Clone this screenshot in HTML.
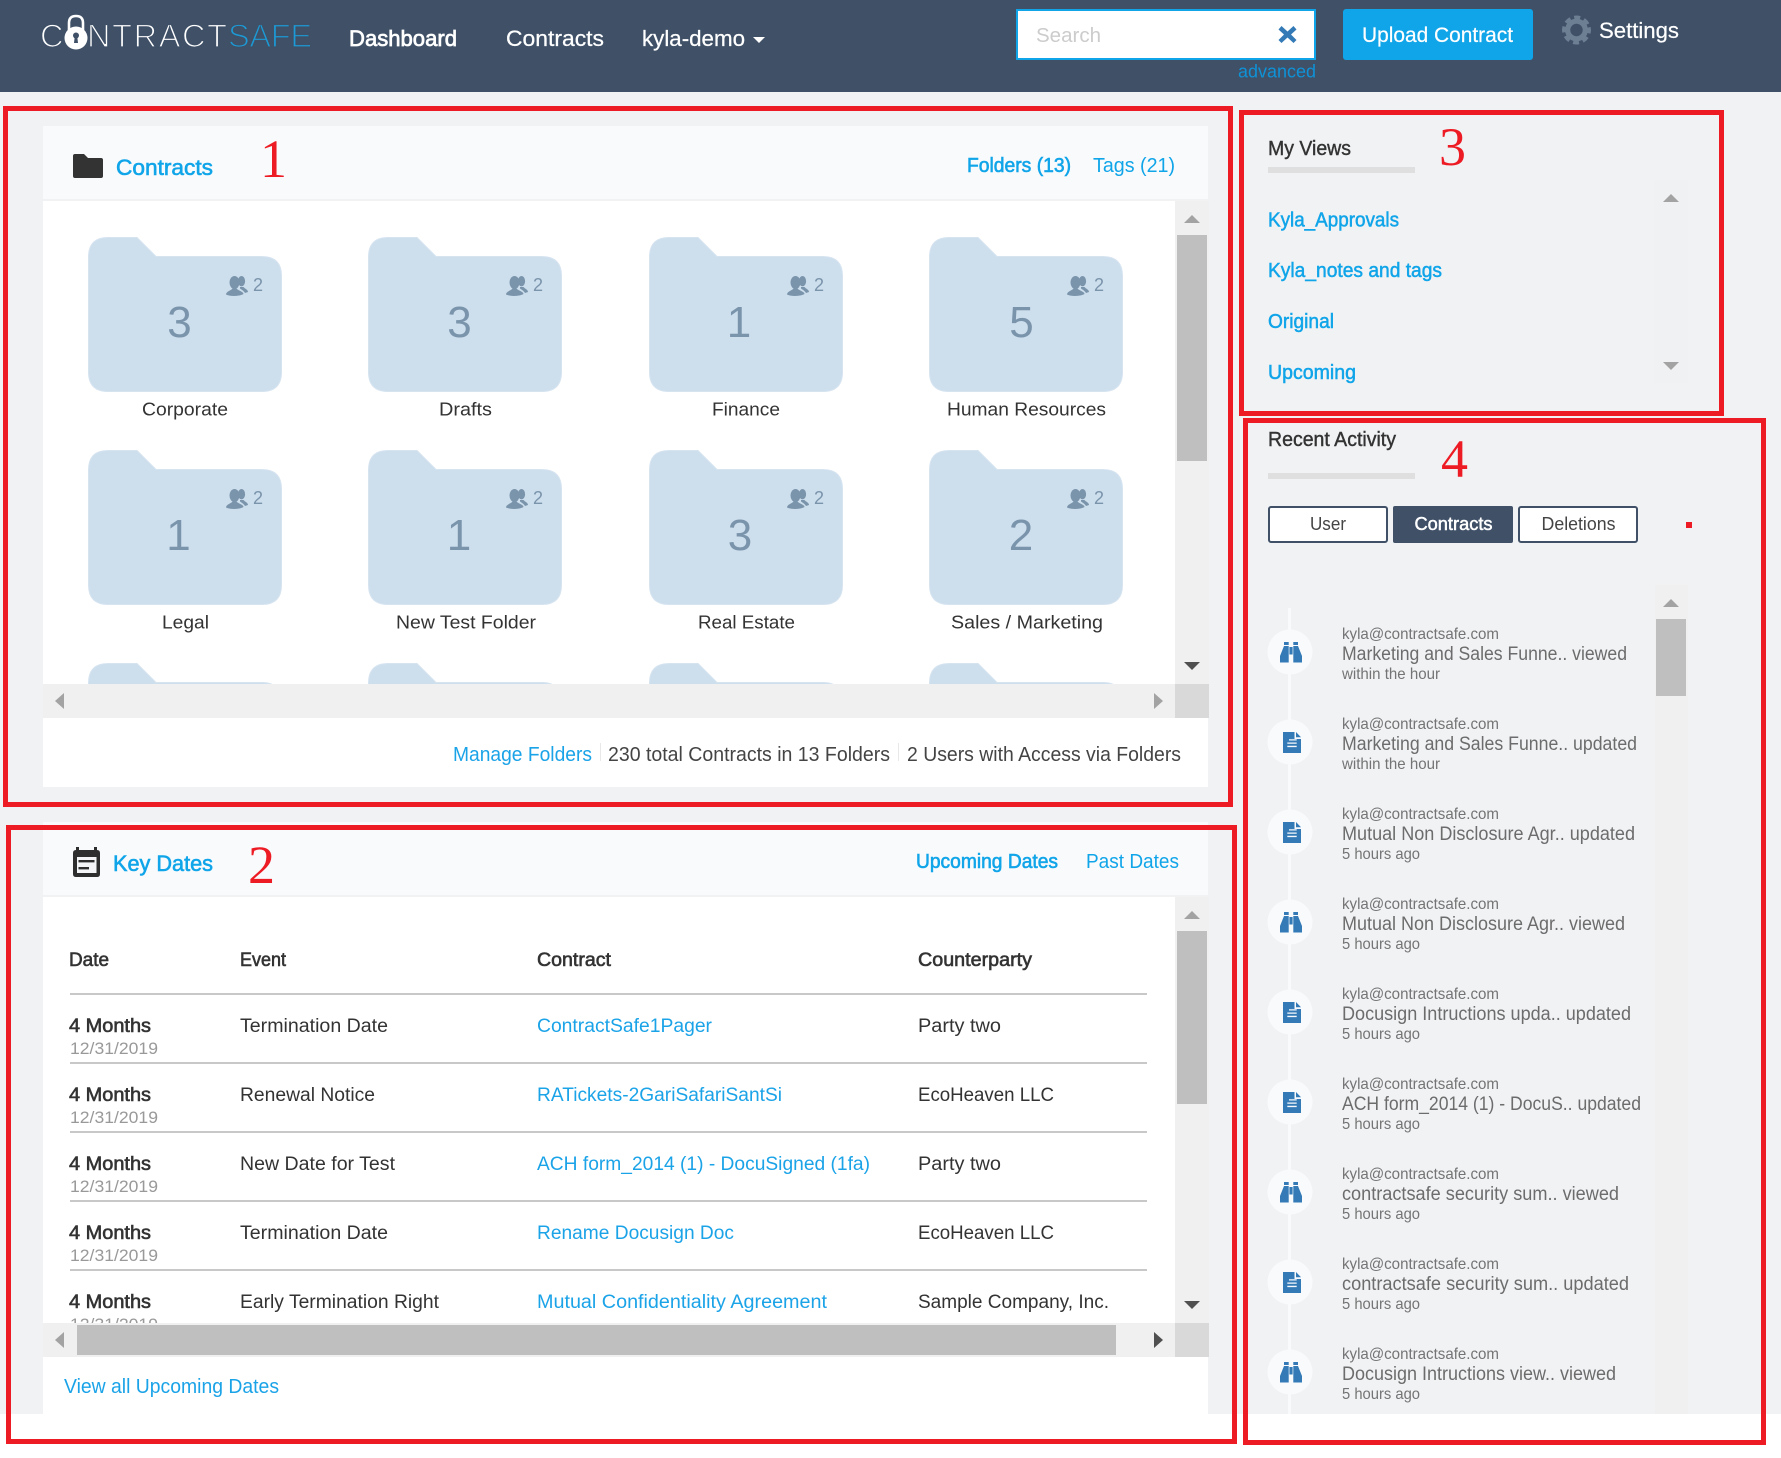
<!DOCTYPE html>
<html><head><meta charset="utf-8"><title>ContractSafe Dashboard</title>
<style>
html,body{margin:0;padding:0;background:#fff;overflow:hidden}
svg{display:block}
text{font-family:"Liberation Sans",Arial,sans-serif;font-size:19px}
.n{fill:#333}
.nm{fill:#333;stroke:#333;stroke-width:.6}
.bl{fill:#10a5e9}
.blm{fill:#10a5e9;stroke:#10a5e9;stroke-width:.6}
.lk{fill:#1ba3e8}
.w{fill:#fff}
.wm{fill:#fff;stroke:#fff;stroke-width:.7}
.d{fill:#999;font-size:17px}
.f{fill:#333;font-size:18px}
.c{fill:#7a94ab;font-size:44px}
.s{fill:#7a94ab;font-size:18px}
.e{fill:#747474;font-size:16px}
.a{fill:#6c6c6c;font-size:19px}
.r{fill:#ed1c24;font-family:"Liberation Serif",serif;font-size:54px}
</style></head><body>
<svg xmlns="http://www.w3.org/2000/svg" width="1781" height="1458" viewBox="0 0 1781 1458">
<defs>
<clipPath id="c1"><rect x="43" y="201" width="1132" height="483"/></clipPath>
<clipPath id="c2"><rect x="43" y="897" width="1132" height="426"/></clipPath>
<path id="fo" fill="#cddeed" stroke="#d6e4f0" stroke-width="1" d="M0.5 20Q0.5 0.5 20 0.5H49L68 19.5H174Q193.5 19.5 193.5 39V135Q193.5 154.5 174 154.5H20Q0.5 154.5 0.5 135Z"/>
<g id="pp" fill="#7a94ab"><ellipse cx="8.5" cy="6.5" rx="5" ry="6.5"/><path d="M0 18.5C0 15.5 5 14.5 6.5 12.5H10.5C12 14.5 17.5 15.5 17.5 18C13 20.5 4 20.5 0 18.5Z"/><ellipse cx="15.5" cy="5.2" rx="3.6" ry="5.2"/><path d="M14 11H17.5C18.5 12.5 22 13.5 22 16L19 17C18 15 15.5 13.5 14 12.5Z"/></g>
<g id="bi" fill="#337ab7"><path d="M4 0H8.7V3H4ZM13.3 0H18V3H13.3ZM4 4H8.7V20.5H0V14ZM18 4H13.3V20.5H22V14ZM9.4 5H12.6V12.5H9.4Z"/></g>
<path id="fi" fill="#337ab7" fill-rule="evenodd" d="M0 0H11.5V7H18V21H0ZM13 0L18 5.2H13ZM6 7.2V8.5H13.7V7.2ZM4.3 10.5V11.8H13.7V10.5ZM4.3 13.8V15.1H13.7V13.8Z"/>
</defs>

<rect width="1781" height="1414" fill="#f1f2f4"/>
<rect width="1781" height="92" fill="#3f5067"/>

<!-- logo -->
<text x="40" y="47" style="font-size:32.5px" class="w" stroke="#3f5067" stroke-width="1.3">C</text>
<text x="87" y="47" style="font-size:32.5px" class="w" stroke="#3f5067" stroke-width="1.3" textLength="140" lengthAdjust="spacing">NTRACT</text>
<text x="228" y="47" style="font-size:32.5px;fill:#1c9ad6" stroke="#3f5067" stroke-width="1.3" textLength="84" lengthAdjust="spacing">SAFE</text>
<path d="M69 30V23Q69 16 76 16Q83 16 83 23V30" fill="none" stroke="#fff" stroke-width="2.6"/>
<circle cx="76" cy="38" r="11.5" fill="#fff"/>
<circle cx="76" cy="35.5" r="3" fill="#3f5067"/><path d="M74.8 36H77.2L78 43H74Z" fill="#3f5067"/>

<!-- nav -->
<text x="349" y="46" class="wm" style="font-size:22px" textLength="108" lengthAdjust="spacingAndGlyphs">Dashboard</text>
<text x="506" y="46" class="w" style="font-size:22px;stroke:#fff;stroke-width:.25" textLength="98" lengthAdjust="spacingAndGlyphs">Contracts</text>
<text x="642" y="46" class="w" style="font-size:22px;stroke:#fff;stroke-width:.25" textLength="103" lengthAdjust="spacingAndGlyphs">kyla-demo</text>
<path d="M753 37H765L759 43Z" fill="#fff"/>

<!-- search -->
<rect x="1017" y="10" width="298" height="49" fill="#fff" stroke="#10a5e9" stroke-width="2"/>
<text x="1036" y="42" style="font-size:20px;fill:#ccc" textLength="65" lengthAdjust="spacingAndGlyphs">Search</text>
<path d="M1278.5 29.5L1281.5 26L1287.5 31.5L1293.5 26L1296.5 29.5L1291 34.5L1296.5 40L1293.5 43L1287.5 37.5L1281.5 43L1278.5 40L1284 34.5Z" fill="#337ab7"/>
<text x="1238" y="77.5" style="font-size:18px;fill:#0f92d6" textLength="78" lengthAdjust="spacingAndGlyphs">advanced</text>
<rect x="1343" y="9" width="190" height="51" rx="3" fill="#10a5e9"/>
<text x="1362" y="42" class="w" style="font-size:21px;stroke:#fff;stroke-width:.2" textLength="151" lengthAdjust="spacingAndGlyphs">Upload Contract</text>
<circle cx="1576.5" cy="30" r="11.5" fill="none" stroke="#6d7f93" stroke-width="6" stroke-dasharray="5.4 3.63" transform="rotate(-12 1576.5 30)"/>
<circle cx="1576.5" cy="30" r="8.8" fill="none" stroke="#6d7f93" stroke-width="5.2"/>
<text x="1599" y="38" class="w" style="font-size:22px;stroke:#fff;stroke-width:.2" textLength="80" lengthAdjust="spacingAndGlyphs">Settings</text>

<!-- panel 1 -->
<rect x="43" y="126" width="1165" height="73" fill="#f9fafc"/>
<rect x="43" y="201" width="1165" height="586" fill="#fff"/>
<path d="M73 156Q73 154 75 154H84L88 158H101Q103 158 103 160V176Q103 178 101 178H75Q73 178 73 176Z" fill="#333"/>
<text x="116" y="175" class="blm" style="font-size:22px" textLength="97" lengthAdjust="spacingAndGlyphs">Contracts</text>
<text x="967" y="172" class="blm" style="font-size:20px" textLength="104" lengthAdjust="spacingAndGlyphs">Folders (13)</text>
<text x="1093" y="172" class="bl" style="font-size:20px" textLength="82" lengthAdjust="spacingAndGlyphs">Tags (21)</text>

<g clip-path="url(#c1)">
<use href="#fo" x="88" y="237"/><use href="#fo" x="368" y="237"/><use href="#fo" x="649" y="237"/><use href="#fo" x="929" y="237"/>
<use href="#fo" x="88" y="450"/><use href="#fo" x="368" y="450"/><use href="#fo" x="649" y="450"/><use href="#fo" x="929" y="450"/>
<use href="#fo" x="88" y="663"/><use href="#fo" x="368" y="663"/><use href="#fo" x="649" y="663"/><use href="#fo" x="929" y="663"/>
</g>
<use href="#pp" x="226" y="276"/><use href="#pp" x="506" y="276"/><use href="#pp" x="787" y="276"/><use href="#pp" x="1067" y="276"/>
<use href="#pp" x="226" y="489"/><use href="#pp" x="506" y="489"/><use href="#pp" x="787" y="489"/><use href="#pp" x="1067" y="489"/>
<text x="253" y="291" class="s">2</text><text x="533" y="291" class="s">2</text><text x="814" y="291" class="s">2</text><text x="1094" y="291" class="s">2</text>
<text x="253" y="504" class="s">2</text><text x="533" y="504" class="s">2</text><text x="814" y="504" class="s">2</text><text x="1094" y="504" class="s">2</text>
<g text-anchor="middle">
<text x="179.5" y="337" class="c">3</text><text x="459.5" y="337" class="c">3</text><text x="739" y="337" class="c">1</text><text x="1021.5" y="337" class="c">5</text>
<text x="178.5" y="550" class="c">1</text><text x="459" y="550" class="c">1</text><text x="740" y="550" class="c">3</text><text x="1021" y="550" class="c">2</text>
</g>
<text x="142" y="415.5" class="f" textLength="86" lengthAdjust="spacingAndGlyphs">Corporate</text>
<text x="439" y="415.5" class="f" textLength="53" lengthAdjust="spacingAndGlyphs">Drafts</text>
<text x="712" y="415.5" class="f" textLength="68" lengthAdjust="spacingAndGlyphs">Finance</text>
<text x="947" y="415.5" class="f" textLength="159" lengthAdjust="spacingAndGlyphs">Human Resources</text>
<text x="162" y="628.5" class="f" textLength="47" lengthAdjust="spacingAndGlyphs">Legal</text>
<text x="396" y="628.5" class="f" textLength="140" lengthAdjust="spacingAndGlyphs">New Test Folder</text>
<text x="698" y="628.5" class="f" textLength="97" lengthAdjust="spacingAndGlyphs">Real Estate</text>
<text x="951" y="628.5" class="f" textLength="152" lengthAdjust="spacingAndGlyphs">Sales / Marketing</text>

<rect x="1175" y="201" width="34" height="483" fill="#f0f0f0"/>
<rect x="1177" y="235" width="30" height="226" fill="#bfbfbf"/>
<path d="M1192 215L1200 223H1184Z" fill="#a3a3a3"/>
<path d="M1184 662H1200L1192 670Z" fill="#505050"/>
<rect x="43" y="684" width="1132" height="34" fill="#f0f0f0"/>
<rect x="1175" y="684" width="34" height="34" fill="#d9d9d9"/>
<path d="M55 701L64 693V709Z" fill="#a3a3a3"/>
<path d="M1163 701L1154 693V709Z" fill="#a3a3a3"/>

<text x="453" y="761" class="lk" style="font-size:20px" textLength="139" lengthAdjust="spacingAndGlyphs">Manage Folders</text>
<rect x="600" y="743" width="1" height="18" fill="#e8e8e8"/>
<text x="608" y="761" style="font-size:20px;fill:#444" textLength="282" lengthAdjust="spacingAndGlyphs">230 total Contracts in 13 Folders</text>
<rect x="898" y="743" width="1" height="18" fill="#e8e8e8"/>
<text x="907" y="761" style="font-size:20px;fill:#444" textLength="274" lengthAdjust="spacingAndGlyphs">2 Users with Access via Folders</text>

<!-- panel 2 -->
<rect x="43" y="822" width="1165" height="73" fill="#f9fafc"/>
<rect x="43" y="897" width="1165" height="517" fill="#fff"/>
<path d="M76 850V847H79V850H94V847H97V850Q100 850 100 853V874Q100 877 97 877H76Q73 877 73 874V853Q73 850 76 850Z" fill="#2e2e2e"/>
<rect x="77" y="857" width="19.5" height="16" fill="#f4f5f6"/>
<rect x="78.5" y="860" width="16" height="2.4" fill="#2e2e2e"/><rect x="78.5" y="867" width="10.5" height="2.4" fill="#2e2e2e"/>
<text x="113" y="871" class="blm" style="font-size:22px" textLength="100" lengthAdjust="spacingAndGlyphs">Key Dates</text>
<text x="916" y="868" class="blm" style="font-size:20px" textLength="142" lengthAdjust="spacingAndGlyphs">Upcoming Dates</text>
<text x="1086" y="868" class="bl" style="font-size:20px" textLength="93" lengthAdjust="spacingAndGlyphs">Past Dates</text>

<text x="69" y="966" class="nm" textLength="40" lengthAdjust="spacingAndGlyphs">Date</text>
<text x="240" y="966" class="nm" textLength="46" lengthAdjust="spacingAndGlyphs">Event</text>
<text x="537" y="966" class="nm" textLength="74" lengthAdjust="spacingAndGlyphs">Contract</text>
<text x="918" y="966" class="nm" textLength="114" lengthAdjust="spacingAndGlyphs">Counterparty</text>
<g fill="#c8c8c8">
<rect x="70" y="993" width="1077" height="2"/><rect x="70" y="1062" width="1077" height="2"/><rect x="70" y="1131" width="1077" height="2"/><rect x="70" y="1200" width="1077" height="2"/><rect x="70" y="1269" width="1077" height="2"/>
</g>
<g clip-path="url(#c2)">
<text x="69" y="1032" class="nm" textLength="82" lengthAdjust="spacingAndGlyphs">4 Months</text>
<text x="70" y="1054" class="d" textLength="88" lengthAdjust="spacingAndGlyphs">12/31/2019</text>
<text x="240" y="1032" class="n" textLength="148" lengthAdjust="spacingAndGlyphs">Termination Date</text>
<text x="537" y="1032" class="lk" textLength="175" lengthAdjust="spacingAndGlyphs">ContractSafe1Pager</text>
<text x="918" y="1032" class="n" textLength="83" lengthAdjust="spacingAndGlyphs">Party two</text>

<text x="69" y="1101" class="nm" textLength="82" lengthAdjust="spacingAndGlyphs">4 Months</text>
<text x="70" y="1123" class="d" textLength="88" lengthAdjust="spacingAndGlyphs">12/31/2019</text>
<text x="240" y="1101" class="n" textLength="135" lengthAdjust="spacingAndGlyphs">Renewal Notice</text>
<text x="537" y="1101" class="lk" textLength="245" lengthAdjust="spacingAndGlyphs">RATickets-2GariSafariSantSi</text>
<text x="918" y="1101" class="n" textLength="136" lengthAdjust="spacingAndGlyphs">EcoHeaven LLC</text>

<text x="69" y="1170" class="nm" textLength="82" lengthAdjust="spacingAndGlyphs">4 Months</text>
<text x="70" y="1192" class="d" textLength="88" lengthAdjust="spacingAndGlyphs">12/31/2019</text>
<text x="240" y="1170" class="n" textLength="155" lengthAdjust="spacingAndGlyphs">New Date for Test</text>
<text x="537" y="1170" class="lk" textLength="333" lengthAdjust="spacingAndGlyphs">ACH form_2014 (1) - DocuSigned (1fa)</text>
<text x="918" y="1170" class="n" textLength="83" lengthAdjust="spacingAndGlyphs">Party two</text>

<text x="69" y="1239" class="nm" textLength="82" lengthAdjust="spacingAndGlyphs">4 Months</text>
<text x="70" y="1261" class="d" textLength="88" lengthAdjust="spacingAndGlyphs">12/31/2019</text>
<text x="240" y="1239" class="n" textLength="148" lengthAdjust="spacingAndGlyphs">Termination Date</text>
<text x="537" y="1239" class="lk" textLength="197" lengthAdjust="spacingAndGlyphs">Rename Docusign Doc</text>
<text x="918" y="1239" class="n" textLength="136" lengthAdjust="spacingAndGlyphs">EcoHeaven LLC</text>

<text x="69" y="1308" class="nm" textLength="82" lengthAdjust="spacingAndGlyphs">4 Months</text>
<text x="70" y="1330" class="d" textLength="88" lengthAdjust="spacingAndGlyphs">12/31/2019</text>
<text x="240" y="1308" class="n" textLength="199" lengthAdjust="spacingAndGlyphs">Early Termination Right</text>
<text x="537" y="1308" class="lk" textLength="290" lengthAdjust="spacingAndGlyphs">Mutual Confidentiality Agreement</text>
<text x="918" y="1308" class="n" textLength="191" lengthAdjust="spacingAndGlyphs">Sample Company, Inc.</text>
</g>
<rect x="1175" y="897" width="34" height="426" fill="#f0f0f0"/>
<rect x="1177" y="931" width="30" height="173" fill="#bfbfbf"/>
<path d="M1192 911L1200 919H1184Z" fill="#a3a3a3"/>
<path d="M1184 1301H1200L1192 1309Z" fill="#505050"/>
<rect x="43" y="1323" width="1132" height="34" fill="#f0f0f0"/>
<rect x="77" y="1325" width="1039" height="30" fill="#bfbfbf"/>
<rect x="1175" y="1323" width="34" height="34" fill="#d9d9d9"/>
<path d="M55 1340L64 1332V1348Z" fill="#a3a3a3"/>
<path d="M1163 1340L1154 1332V1348Z" fill="#505050"/>
<text x="64" y="1393" class="lk" style="font-size:20px" textLength="215" lengthAdjust="spacingAndGlyphs">View all Upcoming Dates</text>

<!-- my views -->
<text x="1268" y="155" class="nm" style="font-size:20px;stroke-width:.4" textLength="83" lengthAdjust="spacingAndGlyphs">My Views</text>
<rect x="1268" y="167" width="147" height="6" fill="#dfdfdf"/>
<text x="1268" y="226.5" class="blm" style="font-size:20px;stroke-width:.5" textLength="131" lengthAdjust="spacingAndGlyphs">Kyla_Approvals</text>
<text x="1268" y="277" class="blm" style="font-size:20px;stroke-width:.5" textLength="174" lengthAdjust="spacingAndGlyphs">Kyla_notes and tags</text>
<text x="1268" y="328" class="blm" style="font-size:20px;stroke-width:.5" textLength="66" lengthAdjust="spacingAndGlyphs">Original</text>
<text x="1268" y="379" class="blm" style="font-size:20px;stroke-width:.5" textLength="88" lengthAdjust="spacingAndGlyphs">Upcoming</text>
<rect x="1654" y="180" width="34" height="203" fill="#f0f1f2"/>
<path d="M1671 194L1679 202H1663Z" fill="#a3a3a3"/>
<path d="M1663 362H1679L1671 370Z" fill="#a3a3a3"/>

<!-- recent activity -->
<text x="1268" y="446" class="nm" style="font-size:20px;stroke-width:.4" textLength="128" lengthAdjust="spacingAndGlyphs">Recent Activity</text>
<rect x="1268" y="473" width="147" height="6" fill="#dfdfdf"/>
<rect x="1269" y="507" width="118" height="35" rx="2" fill="#fff" stroke="#3f5067" stroke-width="2"/>
<rect x="1393" y="506" width="120" height="37" rx="2" fill="#3f5067"/>
<rect x="1519" y="507" width="118" height="35" rx="2" fill="#fff" stroke="#3f5067" stroke-width="2"/>
<text x="1310" y="530" style="font-size:18px;fill:#444" textLength="36" lengthAdjust="spacingAndGlyphs">User</text>
<text x="1414.5" y="530" class="wm" style="font-size:18px;stroke-width:.5" textLength="78" lengthAdjust="spacingAndGlyphs">Contracts</text>
<text x="1541.5" y="530" style="font-size:18px;fill:#444" textLength="74" lengthAdjust="spacingAndGlyphs">Deletions</text>
<rect x="1686" y="522" width="6" height="6" fill="#ed1c24"/>

<rect x="1655" y="585" width="33" height="829" fill="#f0f0f0"/>
<rect x="1656" y="619" width="30" height="77" fill="#bfbfbf"/>
<path d="M1671 599L1679 607H1663Z" fill="#a3a3a3"/>

<rect x="1288" y="608" width="3" height="806" fill="#f8fafc"/>
<g fill="#f8fafc">
<circle cx="1290" cy="652" r="22.5"/><circle cx="1290" cy="742" r="22.5"/><circle cx="1290" cy="832" r="22.5"/><circle cx="1290" cy="922" r="22.5"/><circle cx="1290" cy="1012" r="22.5"/><circle cx="1290" cy="1102" r="22.5"/><circle cx="1290" cy="1192" r="22.5"/><circle cx="1290" cy="1282" r="22.5"/><circle cx="1290" cy="1372" r="22.5"/>
</g>
<use href="#bi" x="1280" y="642"/>
<use href="#fi" x="1283" y="732"/>
<use href="#fi" x="1283" y="822"/>
<use href="#bi" x="1280" y="912"/>
<use href="#fi" x="1283" y="1002"/>
<use href="#fi" x="1283" y="1092"/>
<use href="#bi" x="1280" y="1182"/>
<use href="#fi" x="1283" y="1272"/>
<use href="#bi" x="1280" y="1362"/>

<text x="1342" y="639" class="e" textLength="157" lengthAdjust="spacingAndGlyphs">kyla@contractsafe.com</text>
<text x="1342" y="660" class="a" textLength="285" lengthAdjust="spacingAndGlyphs">Marketing and Sales Funne.. viewed</text>
<text x="1342" y="679" class="e" textLength="98" lengthAdjust="spacingAndGlyphs">within the hour</text>

<text x="1342" y="729" class="e" textLength="157" lengthAdjust="spacingAndGlyphs">kyla@contractsafe.com</text>
<text x="1342" y="750" class="a" textLength="295" lengthAdjust="spacingAndGlyphs">Marketing and Sales Funne.. updated</text>
<text x="1342" y="769" class="e" textLength="98" lengthAdjust="spacingAndGlyphs">within the hour</text>

<text x="1342" y="819" class="e" textLength="157" lengthAdjust="spacingAndGlyphs">kyla@contractsafe.com</text>
<text x="1342" y="840" class="a" textLength="293" lengthAdjust="spacingAndGlyphs">Mutual Non Disclosure Agr.. updated</text>
<text x="1342" y="859" class="e" textLength="78" lengthAdjust="spacingAndGlyphs">5 hours ago</text>

<text x="1342" y="909" class="e" textLength="157" lengthAdjust="spacingAndGlyphs">kyla@contractsafe.com</text>
<text x="1342" y="930" class="a" textLength="283" lengthAdjust="spacingAndGlyphs">Mutual Non Disclosure Agr.. viewed</text>
<text x="1342" y="949" class="e" textLength="78" lengthAdjust="spacingAndGlyphs">5 hours ago</text>

<text x="1342" y="999" class="e" textLength="157" lengthAdjust="spacingAndGlyphs">kyla@contractsafe.com</text>
<text x="1342" y="1020" class="a" textLength="289" lengthAdjust="spacingAndGlyphs">Docusign Intructions upda.. updated</text>
<text x="1342" y="1039" class="e" textLength="78" lengthAdjust="spacingAndGlyphs">5 hours ago</text>

<text x="1342" y="1089" class="e" textLength="157" lengthAdjust="spacingAndGlyphs">kyla@contractsafe.com</text>
<text x="1342" y="1110" class="a" textLength="299" lengthAdjust="spacingAndGlyphs">ACH form_2014 (1) - DocuS.. updated</text>
<text x="1342" y="1129" class="e" textLength="78" lengthAdjust="spacingAndGlyphs">5 hours ago</text>

<text x="1342" y="1179" class="e" textLength="157" lengthAdjust="spacingAndGlyphs">kyla@contractsafe.com</text>
<text x="1342" y="1200" class="a" textLength="277" lengthAdjust="spacingAndGlyphs">contractsafe security sum.. viewed</text>
<text x="1342" y="1219" class="e" textLength="78" lengthAdjust="spacingAndGlyphs">5 hours ago</text>

<text x="1342" y="1269" class="e" textLength="157" lengthAdjust="spacingAndGlyphs">kyla@contractsafe.com</text>
<text x="1342" y="1290" class="a" textLength="287" lengthAdjust="spacingAndGlyphs">contractsafe security sum.. updated</text>
<text x="1342" y="1309" class="e" textLength="78" lengthAdjust="spacingAndGlyphs">5 hours ago</text>

<text x="1342" y="1359" class="e" textLength="157" lengthAdjust="spacingAndGlyphs">kyla@contractsafe.com</text>
<text x="1342" y="1380" class="a" textLength="274" lengthAdjust="spacingAndGlyphs">Docusign Intructions view.. viewed</text>
<text x="1342" y="1399" class="e" textLength="78" lengthAdjust="spacingAndGlyphs">5 hours ago</text>

<!-- annotations -->
<g fill="none" stroke="#ed1c24" stroke-width="5">
<rect x="5.5" y="108.5" width="1225" height="696"/>
<rect x="8.5" y="827.5" width="1226" height="614"/>
<rect x="1241.5" y="112.5" width="480" height="301"/>
<rect x="1245.5" y="420.5" width="518" height="1022"/>
</g>
<text x="260" y="177" class="r">1</text>
<text x="248" y="883" class="r">2</text>
<text x="1439" y="165" class="r">3</text>
<text x="1441" y="477" class="r">4</text>
</svg>
</body></html>
